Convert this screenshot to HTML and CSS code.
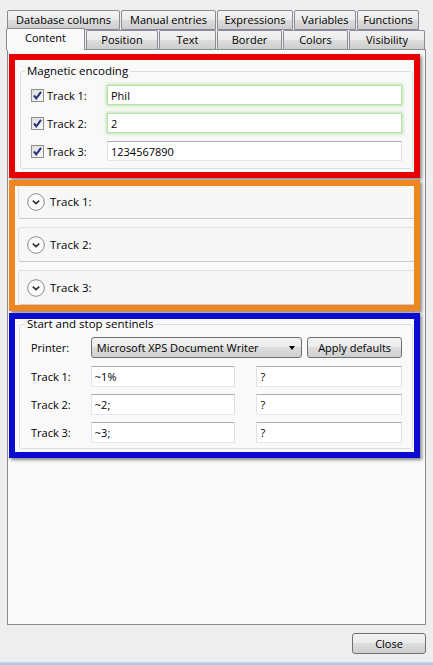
FILE: index.html
```html
<!DOCTYPE html>
<html lang="en">
<head>
    <meta charset="UTF-8">
    <meta name="viewport" content="width=device-width, initial-scale=1.0">
    <title>Magnetic encoding</title>
    <link rel="stylesheet" href="styles.css">
</head>
<body>

<div class="window">
    <div class="tab-strip">
        <div class="tab-row tab-row-top">
            <div class="tab t-db">Database columns</div>
            <div class="tab t-manual">Manual entries</div>
            <div class="tab t-expr">Expressions</div>
            <div class="tab t-vars">Variables</div>
            <div class="tab t-func">Functions</div>
        </div>
        <div class="tab-row tab-row-bottom">
            <div class="tab active t-content">Content</div>
            <div class="tab t-pos">Position</div>
            <div class="tab t-text">Text</div>
            <div class="tab t-border">Border</div>
            <div class="tab t-colors">Colors</div>
            <div class="tab t-vis">Visibility</div>
        </div>
    </div>

    <div class="panel">
        <!-- red: magnetic encoding -->
        <div class="mark mark-red">
            <fieldset class="group group-enc">
                <legend>Magnetic encoding</legend>
                <div class="enc-row">
                    <span class="check"><svg width="11" height="11" viewBox="0 0 11 11"><path d="M2 5.5 L4.3 8.3 L9 1.8" fill="none" stroke="#26337a" stroke-width="2"/></svg></span>
                    <span class="enc-label">Track 1:</span>
                    <div class="textbox glow">Phil</div>
                </div>
                <div class="enc-row">
                    <span class="check"><svg width="11" height="11" viewBox="0 0 11 11"><path d="M2 5.5 L4.3 8.3 L9 1.8" fill="none" stroke="#26337a" stroke-width="2"/></svg></span>
                    <span class="enc-label">Track 2:</span>
                    <div class="textbox glow">2</div>
                </div>
                <div class="enc-row">
                    <span class="check"><svg width="11" height="11" viewBox="0 0 11 11"><path d="M2 5.5 L4.3 8.3 L9 1.8" fill="none" stroke="#26337a" stroke-width="2"/></svg></span>
                    <span class="enc-label">Track 3:</span>
                    <div class="textbox">1234567890</div>
                </div>
            </fieldset>
        </div>

        <!-- orange: expanders -->
        <div class="mark mark-orange">
            <div class="expanders">
                <div class="expander">
                    <svg class="chev" width="18" height="18" viewBox="0 0 18 18"><circle cx="9" cy="9" r="8.3" fill="#fbfbfb" stroke="#8c8c8c"/><path d="M5.8 7.6 L9 10.6 L12.2 7.6" fill="none" stroke="#333" stroke-width="1.7"/></svg>
                    <span>Track 1:</span>
                </div>
                <div class="expander">
                    <svg class="chev" width="18" height="18" viewBox="0 0 18 18"><circle cx="9" cy="9" r="8.3" fill="#fbfbfb" stroke="#8c8c8c"/><path d="M5.8 7.6 L9 10.6 L12.2 7.6" fill="none" stroke="#333" stroke-width="1.7"/></svg>
                    <span>Track 2:</span>
                </div>
                <div class="expander">
                    <svg class="chev" width="18" height="18" viewBox="0 0 18 18"><circle cx="9" cy="9" r="8.3" fill="#fbfbfb" stroke="#8c8c8c"/><path d="M5.8 7.6 L9 10.6 L12.2 7.6" fill="none" stroke="#333" stroke-width="1.7"/></svg>
                    <span>Track 3:</span>
                </div>
            </div>
        </div>

        <!-- blue: sentinels -->
        <div class="mark mark-blue">
            <fieldset class="group group-sent">
                <legend>Start and stop sentinels</legend>
                <div class="sent-row printer-row">
                    <span class="sent-label">Printer:</span>
                    <div class="combo">
                        <span>Microsoft XPS Document Writer</span>
                        <span class="arrow"></span>
                    </div>
                    <div class="btn apply">Apply defaults</div>
                </div>
                <div class="sent-row">
                    <span class="sent-label">Track 1:</span>
                    <div class="textbox start">~1%</div>
                    <div class="textbox stop">?</div>
                </div>
                <div class="sent-row">
                    <span class="sent-label">Track 2:</span>
                    <div class="textbox start">~2;</div>
                    <div class="textbox stop">?</div>
                </div>
                <div class="sent-row">
                    <span class="sent-label">Track 3:</span>
                    <div class="textbox start">~3;</div>
                    <div class="textbox stop">?</div>
                </div>
            </fieldset>
        </div>
    </div>

    <div class="footer">
        <div class="btn close">Close</div>
    </div>
    <div class="frame-edge"></div>
</div>

</body>
</html>
```

FILE: styles.css
```css
body {
    margin: 0;
    padding: 0;
    background-color: #eeeeee;
    font-family: "Open Sans", "Noto Sans", sans-serif;
    font-size: 11px;
    color: #000;
}
.window {
    width: 433px;
    height: 665px;
    padding-top: 10px;
    box-sizing: border-box;
    display: flex;
    flex-direction: column;
    overflow: hidden;
}

/* tabs */
.tab-row {
    display: flex;
    gap: 1px;
}
.tab-row-top {
    margin-left: 7px;
    height: 20px;
}
.tab-row-bottom {
    margin-left: 6px;
    height: 19px;
}
.tab {
    box-sizing: border-box;
    border: 1px solid #898c95;
    border-radius: 2px 2px 0 0;
    background: linear-gradient(#f3f3f3, #ebebeb 50%, #dddddd 50%, #cdcdcd);
    display: flex;
    align-items: center;
    justify-content: center;
    line-height: 14px;
    white-space: nowrap;
}
.tab-row-top .tab {
    height: 20px;
}
.tab-row-bottom .tab {
    height: 19px;
    border-bottom: none;
}
.tab.active {
    position: relative;
    z-index: 2;
    height: 22px;
    margin-top: -2px;
    margin-bottom: -1px;
    background: #f9f9f9;
    padding-bottom: 3px;
}
.t-db { width: 113px; }
.t-manual { width: 95px; }
.t-expr { width: 76px; }
.t-vars { width: 62px; }
.t-func { width: 62px; }
.t-content { width: 79px; }
.t-pos { width: 72px; }
.t-text { width: 57px; }
.t-border { width: 65px; }
.t-colors { width: 65px; }
.t-vis { width: 76px; }

/* main panel */
.panel {
    box-sizing: border-box;
    margin-left: 7px;
    width: 419px;
    height: 576px;
    border: 1px solid #898c95;
    background-color: #f9f9f9;
    padding: 4px 0 0 1px;
}

.mark {
    box-sizing: border-box;
    width: 411px;
    border: 6px solid;
    box-shadow: 2px 2px 3px rgba(0, 0, 0, 0.45);
    overflow: hidden;
    margin-bottom: 2px;
}
.mark-red {
    border-color: #e60000;
    height: 124px;
}
.mark-orange {
    border-color: #f0861e;
    height: 131px;
}
.mark-blue {
    border-color: #0a0ad0;
    height: 145px;
}

.group {
    border: 1px solid #d5dfe5;
    border-radius: 3px;
    padding: 0;
    min-width: 0;
}
.group legend {
    margin-left: -6px;
    padding: 0 2px;
    line-height: 12px;
    font-size: 11.5px;
}
.group-enc {
    margin: 5px 1px 2px 5px;
    padding: 8px 10px 7px 10px;
}
.group-sent {
    margin: -1px 1px 2px 4px;
    padding: 7px 10px 5px 11px;
}

/* magnetic encoding rows */
.enc-row {
    display: flex;
    align-items: center;
    height: 20px;
    margin-bottom: 8px;
}
.enc-row:last-child {
    margin-bottom: 0;
}
.check {
    box-sizing: border-box;
    width: 13px;
    height: 13px;
    border: 1px solid #8e8f8f;
    background: linear-gradient(135deg, #dcdcdc, #fbfbfb);
    display: flex;
    align-items: center;
    justify-content: center;
    margin-right: 3px;
}
.enc-label {
    width: 60px;
}
.textbox {
    box-sizing: border-box;
    height: 20px;
    border: 1px solid;
    border-color: #abadb3 #dbdfe6 #e3e9ef #e2e3ea;
    background-color: #ffffff;
    padding: 0 3px;
    display: flex;
    align-items: center;
}
.enc-row .textbox {
    width: 295px;
}
.textbox.glow {
    border-color: #b9e0ac;
    box-shadow: 0 0 3px 1px rgba(130, 215, 110, 0.55);
}

/* expanders */
.expanders {
    margin: -2px -1px 0 3px;
    display: flex;
    flex-direction: column;
    gap: 8px;
}
.expander {
    box-sizing: border-box;
    height: 35px;
    border: 1px solid #dde2e6;
    border-bottom-color: #c4ced8;
    border-radius: 3px;
    background-color: #f7f7f7;
    display: flex;
    align-items: center;
    padding-left: 8px;
    font-size: 11.5px;
}
.chev {
    margin-right: 5px;
}

/* sentinels */
.sent-row {
    display: flex;
    align-items: center;
    height: 21px;
    margin-bottom: 7px;
}
.printer-row {
    margin-bottom: 8px;
}
.sent-row:last-child {
    margin-bottom: 0;
}
.sent-label {
    width: 60px;
}
.sent-row .textbox {
    height: 21px;
}
.textbox.start {
    width: 145px;
    margin-right: 21px;
}
.textbox.stop {
    width: 146px;
}
.combo {
    box-sizing: border-box;
    width: 212px;
    height: 21px;
    border: 1px solid #707070;
    border-radius: 3px;
    background: linear-gradient(#f2f2f2, #ebebeb 50%, #dddddd 50%, #cfcfcf);
    display: flex;
    align-items: center;
    justify-content: space-between;
    padding: 0 6px 0 5px;
    margin-right: 5px;
}
.arrow {
    width: 0;
    height: 0;
    border-left: 3.5px solid transparent;
    border-right: 3.5px solid transparent;
    border-top: 4px solid #000;
}
.btn {
    box-sizing: border-box;
    height: 21px;
    border: 1px solid #707070;
    border-radius: 3px;
    background: linear-gradient(#f2f2f2, #ebebeb 50%, #dddddd 50%, #cfcfcf);
    display: flex;
    align-items: center;
    justify-content: center;
    cursor: pointer;
}
.apply {
    width: 95px;
}

/* footer */
.footer {
    height: 37px;
    display: flex;
    justify-content: flex-end;
    align-items: flex-start;
    padding: 8px 7px 0 0;
    box-sizing: border-box;
}
.close {
    width: 74px;
}
.frame-edge {
    height: 3px;
    background: linear-gradient(#c9d9ec, #a9c4e4);
}
```
